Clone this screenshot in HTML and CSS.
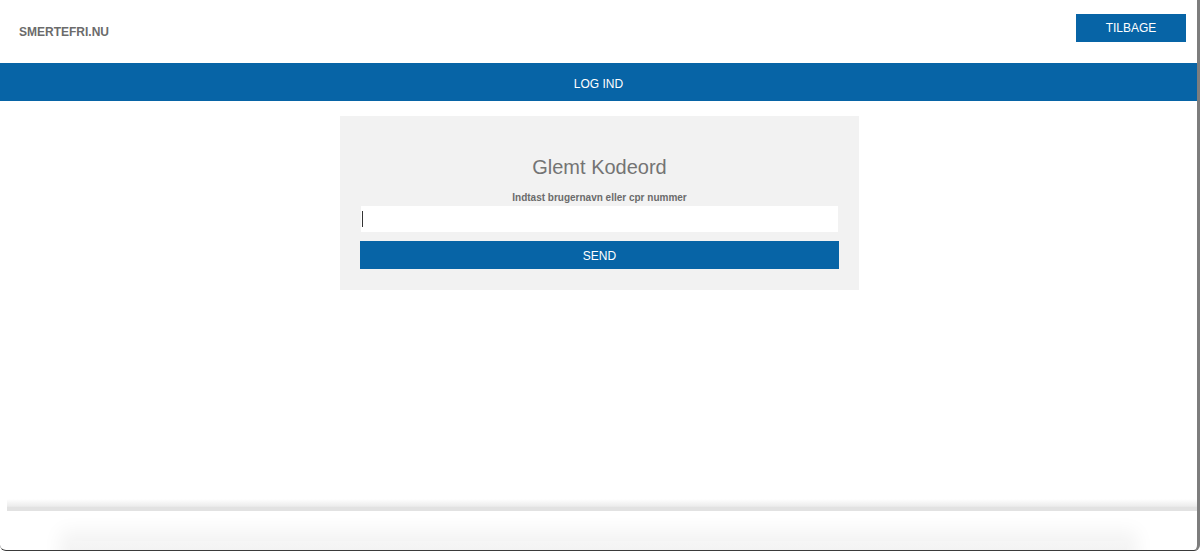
FILE: index.html
```html
<!DOCTYPE html>
<html lang="da">
<head>
    <meta charset="UTF-8">
    <meta name="viewport" content="width=device-width, initial-scale=1.0">
    <title>Smertefri.nu - Glemt kodeord</title>
    <link rel="stylesheet" href="styles.css">
</head>
<body>
    <div class="window">
        <header class="topbar">
            <div class="logo">SMERTEFRI.NU</div>
            <a class="btn btn-back" href="#">TILBAGE</a>
        </header>
        <nav class="navbar">LOG IND</nav>
        <main class="content">
            <form class="card">
                <h1 class="card-title">Glemt Kodeord</h1>
                <label class="card-label" for="user">Indtast brugernavn eller cpr nummer</label>
                <div class="field">
                    <input id="user" class="input" type="text">
                    <span class="caret"></span>
                </div>
                <button class="btn btn-send" type="button">SEND</button>
            </form>
        </main>
        <footer class="footer">
            <div class="footer-rule"></div>
            <div class="footer-panel"></div>
        </footer>
    </div>
</body>
</html>
```

FILE: styles.css
```css
:root {
    --blue: #0764a6;
    --gray-text: #6b6b6b;
    --card: #f2f2f2;
}
body {
    margin: 0;
    background-color: #fff;
    font-family: "Liberation Sans", Arial, Helvetica, sans-serif;
}
.window {
    height: 551px;
    box-sizing: border-box;
    display: flex;
    flex-direction: column;
    overflow: hidden;
    border-right: 3px solid #7d7d7d;
    border-bottom: 1px solid #3a3a3a;
    border-bottom-left-radius: 6px;
    border-bottom-right-radius: 6px;
}
.topbar {
    height: 63px;
    flex: 0 0 63px;
    display: flex;
    align-items: center;
    justify-content: space-between;
    padding: 0 11px 0 19px;
    box-sizing: border-box;
}
.logo {
    font-size: 12px;
    font-weight: bold;
    color: var(--gray-text);
    margin-top: 1px;
}
.btn {
    display: flex;
    align-items: center;
    justify-content: center;
    background-color: var(--blue);
    color: #fff;
    font-family: inherit;
    font-size: 12px;
    border: none;
    text-decoration: none;
}
.btn-back {
    width: 110px;
    height: 28px;
    margin-top: -8px;
}
.navbar {
    height: 38px;
    flex: 0 0 38px;
    box-sizing: border-box;
    padding-top: 3px;
    background-color: var(--blue);
    color: #fff;
    font-size: 12px;
    display: flex;
    align-items: center;
    justify-content: center;
}
.content {
    flex: 1;
    display: flex;
    justify-content: center;
    align-items: flex-start;
    padding: 15px 0 0 2px;
}
.card {
    width: 519px;
    box-sizing: border-box;
    padding: 40px 20px 21px;
    background-color: var(--card);
    display: flex;
    flex-direction: column;
    align-items: center;
}
.card-title {
    margin: 0 0 13px;
    font-size: 20px;
    line-height: 23px;
    font-weight: normal;
    color: #747474;
}
.card-label {
    font-size: 10px;
    line-height: 12px;
    font-weight: bold;
    color: var(--gray-text);
    margin-bottom: 2px;
}
.field {
    position: relative;
    width: 477px;
    margin-bottom: 9px;
}
.input {
    display: block;
    width: 100%;
    height: 26px;
    box-sizing: border-box;
    border: none;
    background-color: #fff;
    outline: none;
}
.caret {
    position: absolute;
    left: 1px;
    top: 5px;
    width: 1px;
    height: 16px;
    background-color: #333;
}
.btn-send {
    width: 479px;
    height: 28px;
    padding-top: 2px;
}
.footer {
    height: 51px;
    flex: 0 0 51px;
}
.footer-rule {
    height: 12px;
    margin-left: 7px;
    background: linear-gradient(to bottom, #fff 0%, #ececec 60%, #e2e2e2 70%, #e2e2e2 100%);
}
.footer-panel {
    height: 40px;
    margin: 30px 70px 0;
    background: linear-gradient(to bottom, #f6f6f6, #e9e9e9);
    box-shadow: 0 0 18px 10px rgba(0, 0, 0, 0.05);
}
```
